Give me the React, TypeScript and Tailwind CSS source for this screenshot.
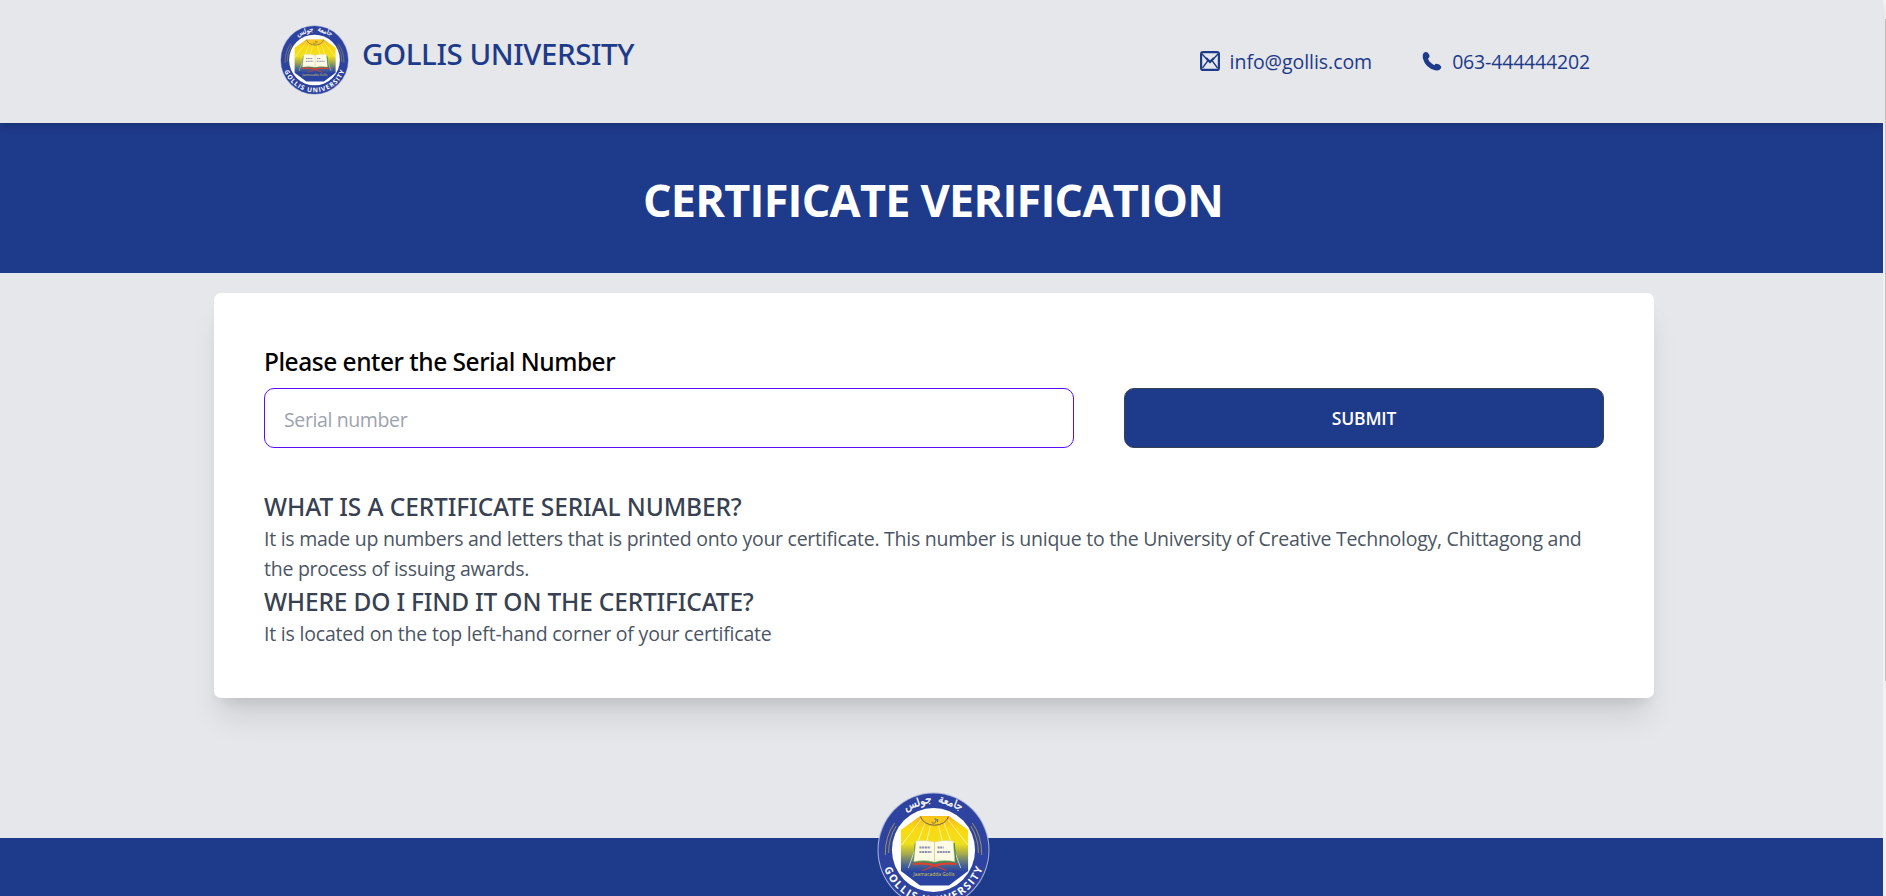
import { useId } from "react";

function Seal({ className }: { className: string }) {
  const id = useId().replace(/[^a-zA-Z0-9]/g, "");
  return (
    <svg className={className} viewBox="0 0 112 116" preserveAspectRatio="none" role="img">
      <defs>
        <linearGradient id={`${id}g`} x1="0" y1="0" x2="0" y2="1">
          <stop offset="0" stopColor="#f9b51c" />
          <stop offset="0.18" stopColor="#fbd90f" />
          <stop offset="0.4" stopColor="#efe01c" />
          <stop offset="0.55" stopColor="#a3a850" />
          <stop offset="0.7" stopColor="#4a6690" />
          <stop offset="0.8" stopColor="#2b43a0" />
          <stop offset="1" stopColor="#2b43a0" />
        </linearGradient>
        <path id={`${id}b`} d="M4 58 A52 53.5 0 0 0 108 58" />
      </defs>
      <ellipse cx="56" cy="58" rx="55.500" ry="57.500" fill="#aab4d8" />
      <ellipse cx="56" cy="58" rx="54.500" ry="56.500" fill="#2d439f" />
      <ellipse cx="56" cy="58" rx="41.200" ry="42" fill="#fff" />
      <path d="M42.700 24H71.300L90.300 38V79L71.300 93.500H42.700L23.700 79V38Z" fill={`url(#${id}g)`} />
      <g stroke="#fff" strokeWidth="0.900" opacity="0.7">
        <path d="M44 27L24.500 53M47.500 31L31 76M53 34L49 50M61 34L65 50M66.500 31L83 76M70 27L90 53" />
      </g>
      <path d="M43.200 24.500A14 10.500 0 0 0 70.800 24.500" fill="#f8c91b" stroke="#5c5a4e" strokeWidth="0.900" />
      <path d="M54 30q3 3 4.500-1q1-3-1.500-2M60 27v3" fill="none" stroke="#5c6a6a" strokeWidth="0.900" />
      <path d="M37.500 51L35.500 70.500L57 71L79 70.500L77 51Z" fill="#3d8a4c" />
      <path d="M38.500 49Q49 47.500 57 50Q65 47.500 75.500 49L77 69.500Q66 67.500 57 70Q47 67.500 36.500 69.500Z" fill="#fdfbe4" stroke="#d9cf94" strokeWidth="0.500" />
      <path d="M57 50.500V69.500" stroke="#c9bd88" strokeWidth="0.700" />
      <path d="M42 55.500H53M60 55.500H66M42 60H54M59.500 60H73" stroke="#62669b" strokeWidth="1.800" strokeDasharray="2.200 0.500" opacity="0.700" />
      <path d="M36 72Q48 70.500 57 73.500Q66 70.500 78.500 72" fill="none" stroke="#e2402c" strokeWidth="2" />
      <path d="M45 78.500Q53 76 59 72.500M69 78.500Q61 76 55 72.500" fill="none" stroke="#d83a2c" strokeWidth="1.300" />
      <text x="56.500" y="84.500" textAnchor="middle" textLength="41" lengthAdjust="spacingAndGlyphs" fontFamily="Open Sans, sans-serif" fontSize="6" fill="#d6c748">Jaamacadda Gollis</text>
      <g fill="none" stroke="#a59a5c" strokeWidth="0.900">
        <path d="M17.500 31Q8 44 8.200 63M19 34Q11.500 46 11.500 61" />
        <path d="M94.500 31Q104 44 103.800 63M93 34Q100.500 46 100.500 61" />
      </g>
      <g fontFamily="DejaVu Sans, sans-serif" fontSize="11" fill="#fff" stroke="#fff" strokeWidth="0.300" textAnchor="middle">
        <text transform="translate(72 14) rotate(20)" textLength="25" lengthAdjust="spacingAndGlyphs">جامعة</text>
        <text transform="translate(41.500 14) rotate(-19)" textLength="28" lengthAdjust="spacingAndGlyphs">جولس</text>
      </g>
      <text fontFamily="Open Sans, sans-serif" fontSize="10.500" fontWeight="700" fill="#fff" textAnchor="middle">
        <textPath href={`#${id}b`} startOffset="50%" textLength="128">GOLLIS UNIVERSITY</textPath>
      </text>
    </svg>
  );
}

function MailIcon() {
  return (
    <svg className="size-5" viewBox="0 0 20 20" fill="none" stroke="#1e3a8a">
      <rect x="1.100" y="1.100" width="17.800" height="17.800" rx="2" strokeWidth="2.200" />
      <path d="M2 3L10 11.500L18 3" strokeWidth="1.400" />
      <path d="M6 7L10 10.800L14 7" strokeWidth="2.200" />
      <path d="M2.500 17L8 9.500M17.500 17L12 9.500" strokeWidth="1.300" />
    </svg>
  );
}

function PhoneIcon() {
  return (
    <svg className="size-5" viewBox="0 0 20 20" fill="#1e3a8a">
      <path d="M1.600 2.100Q3.400 .2 5.600 1.400Q7.700 3.500 7.500 5.700Q7.100 7.100 5.900 7.600Q7.500 12 12.300 14.200Q13.200 12.800 14.800 12.800Q17.500 13.200 19.200 15.400Q19.600 17.400 17.600 18.800Q15.800 19.900 13.200 19.300Q3.500 16.800 .8 7.200Q.2 3.800 1.600 2.100Z" />
    </svg>
  );
}

export default function App() {
  return (
    <div className="flex h-[896px] w-full overflow-hidden bg-gray-200 font-['Open_Sans','Noto_Sans',sans-serif] text-[19.5px] leading-[30px]">
      <div className="flex min-w-0 flex-1 flex-col bg-[#e5e7eb]">
        <header className="relative z-10 flex h-[123px] shrink-0 justify-between bg-[#e5e7eb] pl-[280px] pr-[293px] shadow-[0_5px_8px_-1px_rgba(0,0,0,0.1),0_2px_5px_-2px_rgba(0,0,0,0.1)]">
          <div className="flex gap-[13px] pt-[25px]">
            <Seal className="h-[70px] w-[69px]" />
            <h1 className="pt-[9px] font-['Noto_Sans'] text-[29.5px] leading-[40px] font-medium tracking-[-0.42px] whitespace-nowrap text-[#1e3a8a]">
              GOLLIS UNIVERSITY
            </h1>
          </div>
          <div className="flex gap-[50px] pt-[46px] text-[#1e3a8a]">
            <div className="flex h-[30px] items-center gap-[10px]">
              <MailIcon />
              <span className="pt-[2px] tracking-[-0.05px]">info@gollis.com</span>
            </div>
            <div className="flex h-[30px] items-center gap-[10px]">
              <PhoneIcon />
              <span className="pt-[2px] tracking-[-0.17px]">063-444444202</span>
            </div>
          </div>
        </header>

        <section className="flex h-[150px] shrink-0 justify-center bg-[#1e3a8a] pr-[17px] pt-[49px]">
          <h2 className="text-[45px] leading-[56px] font-bold tracking-[-0.77px] whitespace-nowrap text-white">
            CERTIFICATE VERIFICATION
          </h2>
        </section>

        <main className="mt-5 ml-[214px] h-[405px] w-[1440px] shrink-0 rounded-[7px] bg-white px-[50px] pt-[51px] shadow-[0_25px_31px_-6px_rgba(0,0,0,0.1),0_10px_13px_-7px_rgba(0,0,0,0.1)]">
          <form className="flex items-end gap-[50px]" onSubmit={(e) => e.preventDefault()}>
            <label className="flex w-[810px] flex-col">
              <span className="mb-[9px] font-['Noto_Sans'] text-[24.5px] leading-[35px] font-medium tracking-[-0.48px] text-black">
                Please enter the Serial Number
              </span>
              <input
                placeholder="Serial number"
                className="h-[60px] rounded-[10px] border border-[#570df8] bg-white px-[19px] pt-[2px] tracking-[-0.38px] outline-none placeholder:text-[#9ca3af]"
              />
            </label>
            <button className="h-[60px] w-[480px] rounded-[10px] border border-[#374151] bg-[#1e3a8a] text-[17.5px] font-semibold tracking-[-0.2px] text-white">
              SUBMIT
            </button>
          </form>
          <div className="pt-[41px] text-[#4b5563]">
            <h3 className="font-['Noto_Sans'] text-[24.5px] leading-[35px] font-medium tracking-[-0.11px] text-[#374151]">
              WHAT IS A CERTIFICATE SERIAL NUMBER?
            </h3>
            <p className="tracking-[-0.26px]">
              It is made up numbers and letters that is printed onto your certificate. This number is unique to the
              University of Creative Technology, Chittagong and the process of issuing awards.
            </p>
            <h3 className="font-['Noto_Sans'] text-[24.5px] leading-[35px] font-medium tracking-[-0.18px] text-[#374151]">
              WHERE DO I FIND IT ON THE CERTIFICATE?
            </h3>
            <p className="tracking-[-0.2px]">It is located on the top left-hand corner of your certificate</p>
          </div>
        </main>

        <footer className="mt-[140px] flex h-[58px] shrink-0 items-start bg-[#1e3a8a] pl-[877px]">
          <Seal className="-mt-[46px] h-[116px] w-[113px] shrink-0" />
        </footer>
      </div>
      <div className="flex w-[3px] shrink-0 justify-end bg-[#f1f1f1] pt-[19px]">
        <div className="h-[662px] w-px bg-[#c1c1c1]" />
      </div>
    </div>
  );
}
